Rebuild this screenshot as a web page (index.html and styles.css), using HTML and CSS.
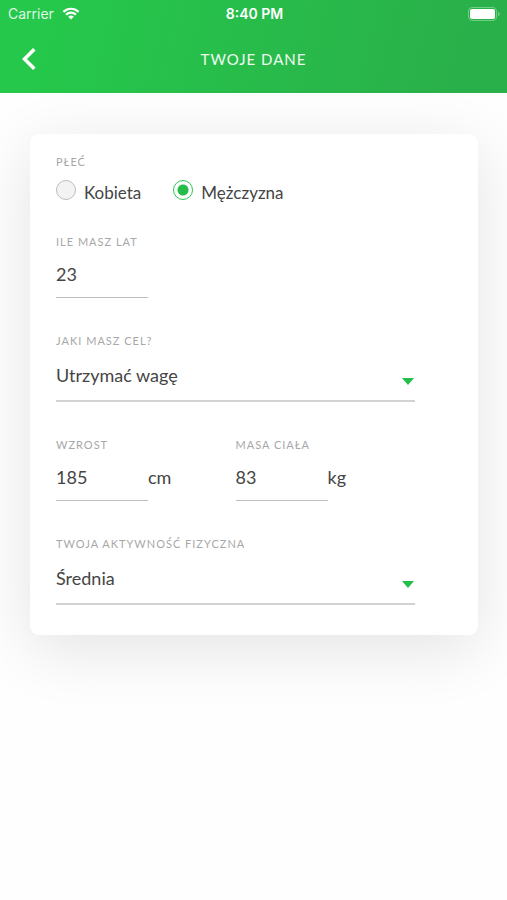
FILE: index.html
```html
<!DOCTYPE html>
<html lang="pl">
<head>
<meta charset="utf-8">
<meta name="viewport" content="width=device-width, initial-scale=1">
<title>Twoje dane</title>
<link rel="stylesheet" href="styles.css">
</head>
<body>
<header class="top">
  <div class="status">
    <div class="carrier">
      <span>Carrier</span>
      <svg class="wifi" viewBox="0 0 18 13" aria-hidden="true">
        <path d="M1.4 4.9a10.8 10.8 0 0 1 15.2 0" />
        <path d="M4.1 7.7a7 7 0 0 1 9.8 0" />
        <path class="wifi-dot" d="M9 12.6 6.2 9.8a4 4 0 0 1 5.6 0z" />
      </svg>
    </div>
    <span class="clock">8:40 PM</span>
    <svg class="battery" viewBox="0 0 33 14" aria-hidden="true">
      <rect class="battery-case" x=".5" y=".5" width="28" height="13" rx="3.5" />
      <rect class="battery-fill" x="2" y="2" width="25" height="10" rx="2" />
      <path class="battery-tip" d="M30 5c1.2.3 1.8 1 1.8 2s-.6 1.700-1.800 2z" />
    </svg>
  </div>
  <nav class="bar">
    <button class="back" type="button" aria-label="Wstecz">
      <svg viewBox="0 0 14 22" aria-hidden="true"><path d="M12.300 1.200 2.500 11l9.800 9.800" /></svg>
    </button>
    <h1 class="title">TWOJE DANE</h1>
  </nav>
</header>
<main class="page">
  <form class="card">
    <fieldset class="field gender">
      <legend class="label">PŁEĆ</legend>
      <div class="options">
        <label class="option"><input class="radio" type="radio" name="plec"><span>Kobieta</span></label>
        <label class="option"><input class="radio" type="radio" name="plec" checked><span>Mężczyzna</span></label>
      </div>
    </fieldset>
    <div class="field">
      <label class="label" for="wiek">ILE MASZ LAT</label>
      <div class="entry"><input class="number" id="wiek" type="text" inputmode="numeric" value="23"></div>
    </div>
    <div class="field">
      <label class="label" for="cel">JAKI MASZ CEL?</label>
      <div class="picker">
        <select class="select" id="cel"><option>Utrzymać wagę</option></select>
        <svg class="arrow" viewBox="0 0 12 7" aria-hidden="true"><path d="M0 0h12L6 7z" /></svg>
      </div>
    </div>
    <div class="pair">
      <div class="field">
        <label class="label" for="wzrost">WZROST</label>
        <div class="entry"><input class="number" id="wzrost" type="text" inputmode="numeric" value="185"><span class="unit">cm</span></div>
      </div>
      <div class="field">
        <label class="label" for="masa">MASA CIAŁA</label>
        <div class="entry"><input class="number" id="masa" type="text" inputmode="numeric" value="83"><span class="unit">kg</span></div>
      </div>
    </div>
    <div class="field">
      <label class="label" for="aktywnosc">TWOJA AKTYWNOŚĆ FIZYCZNA</label>
      <div class="picker">
        <select class="select" id="aktywnosc"><option>Średnia</option></select>
        <svg class="arrow" viewBox="0 0 12 7" aria-hidden="true"><path d="M0 0h12L6 7z" /></svg>
      </div>
    </div>
  </form>
</main>
</body>
</html>
```
FILE: styles.css
```css
* {
  box-sizing: border-box;
}

body {
  margin: 0;
  background: #fefefe;
  color: #454545;
  font-family: Lato, "Liberation Sans", sans-serif;
  font-size: 18px;
}

.top {
  position: relative;
  z-index: 1;
  padding-bottom: 15px;
  background: linear-gradient(105deg, #25c84b 10%, #2ab04a 90%);
  color: #fff;
}

.status {
  display: grid;
  grid-template-columns: 1fr auto 1fr;
  align-items: center;
  height: 27px;
  padding: 0 6px 0 8px;
  font-family: Inter, "Liberation Sans", sans-serif;
  font-size: 14px;
}

.carrier {
  display: flex;
  align-items: center;
  gap: 8px;
  color: #dff7e4;
}

.wifi {
  width: 18px;
  height: 13px;
  fill: none;
  stroke: #fff;
  stroke-width: 2.2;
}

.wifi .wifi-dot {
  fill: #fff;
  stroke: none;
}

.clock {
  font-weight: 600;
}

.battery {
  justify-self: end;
  width: 33px;
  height: 14px;
}

.battery-case {
  fill: none;
  stroke: #6fcf83;
}

.battery-fill {
  fill: #fff;
}

.battery-tip {
  fill: #6fcf83;
}

.bar {
  display: grid;
  grid-template-columns: 48px 1fr 48px;
  align-items: center;
  height: 51px;
  padding-top: 13px;
}

.back {
  display: flex;
  justify-content: flex-end;
  width: 36px;
  padding: 0;
  border: 0;
  background: none;
}

.back svg {
  width: 14px;
  height: 22px;
  fill: none;
  stroke: #fff;
  stroke-width: 3.5;
}

.title {
  margin: 0;
  color: #effbf1;
  font-size: 15px;
  font-weight: 400;
  letter-spacing: 1px;
  text-align: center;
}

.page {
  padding: 41px 29px 80px 30px;
}

.card {
  display: flex;
  flex-direction: column;
  gap: 35px;
  padding: 20px 63px 30px 26px;
  border-radius: 9px;
  background: #fff;
  box-shadow: 0 14px 64px rgba(0, 0, 0, 0.11);
}

.field {
  min-width: 0;
  margin: 0;
  padding: 0;
  border: 0;
}

.label {
  display: block;
  padding: 0;
  color: #a8a8a8;
  font-size: 11px;
  line-height: 16px;
  letter-spacing: 1px;
}

.options {
  display: flex;
  gap: 32px;
  height: 29px;
  padding-top: 10px;
}

.option {
  display: flex;
  align-items: flex-start;
  gap: 8px;
  font-size: 17px;
  line-height: 25px;
}

.radio {
  appearance: none;
  flex: none;
  width: 20px;
  height: 20px;
  margin: 0;
  border: 1px solid #bdbdbd;
  border-radius: 50%;
  background: #f3f3f3;
}

.radio:checked {
  border-color: #2fc553;
  background: radial-gradient(circle, #25bd49 5px, #fff 6px);
}

.entry {
  display: flex;
  align-items: center;
}

.number {
  width: 92px;
  height: 48px;
  padding: 0;
  border: 0;
  border-bottom: 1px solid #bdbdbd;
  border-radius: 0;
  background: none;
  color: inherit;
  font: inherit;
}

.pair {
  display: grid;
  grid-template-columns: 1fr 1fr;
}

.picker {
  position: relative;
}

.select {
  display: block;
  appearance: none;
  width: 100%;
  height: 53px;
  padding: 0;
  border: 0;
  border-bottom: 2px solid #d2d2d2;
  border-radius: 0;
  background: none;
  color: inherit;
  font: inherit;
}

.arrow {
  position: absolute;
  right: 1px;
  bottom: 17px;
  width: 12px;
  height: 7px;
  fill: #22c04a;
  pointer-events: none;
}
```
